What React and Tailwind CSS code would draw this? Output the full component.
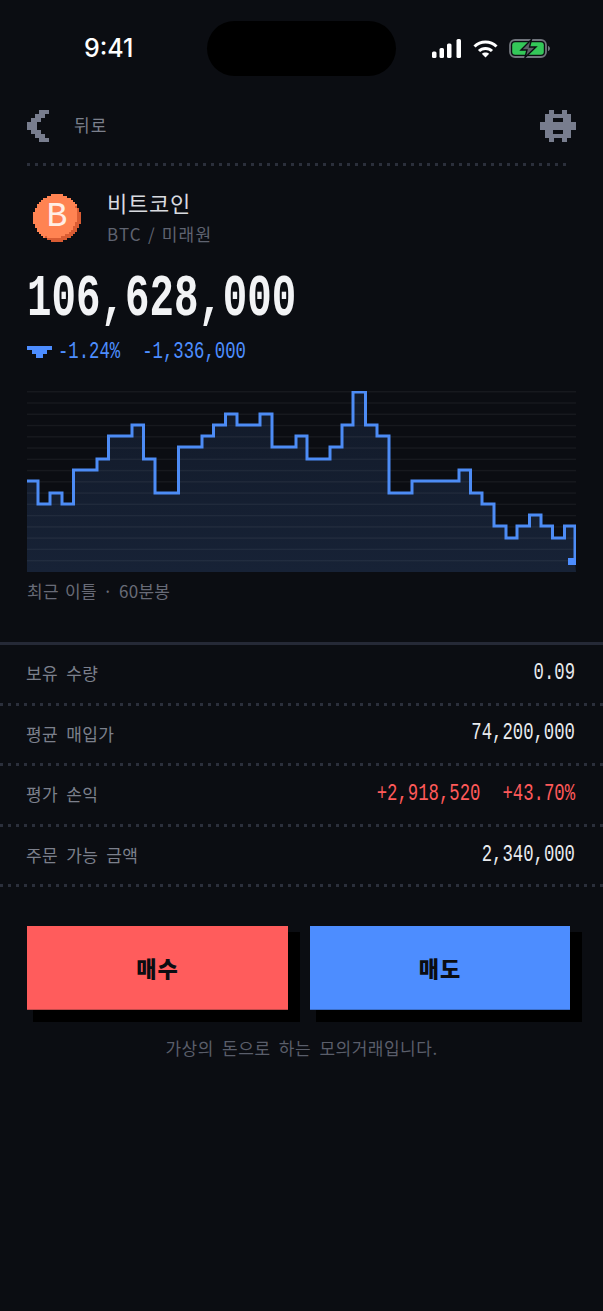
import React from "react";

const mono = "font-['Liberation_Mono',monospace] slashed-zero";
const kr = "font-['Noto_Sans_CJK_KR','Noto_Sans',sans-serif]";
const dotted =
  "h-[3px] bg-[repeating-linear-gradient(90deg,#2b2f3b_0_3px,transparent_3px_8px)]";

// step line of the chart, x / y in page pixels minus chart origin
const points = [
  [27, 481], [38, 481], [38, 504], [50, 504], [50, 493], [62, 493], [62, 504], [73.5, 504],
  [73.5, 470], [97, 470], [97, 459], [108.5, 459], [108.5, 436], [132, 436], [132, 425],
  [143.5, 425], [143.5, 459], [155, 459], [155, 493], [178.5, 493], [178.5, 447], [202, 447],
  [202, 436], [213.5, 436], [213.5, 425], [225.5, 425], [225.5, 414], [237, 414], [237, 425],
  [260, 425], [260, 414], [272, 414], [272, 447], [296, 447], [296, 436], [307, 436],
  [307, 459], [330, 459], [330, 447], [342, 447], [342, 425], [353, 425], [353, 392],
  [365.5, 392], [365.5, 425], [377, 425], [377, 436], [389, 436], [389, 493], [412, 493],
  [412, 481], [459, 481], [459, 470], [470.5, 470], [470.5, 493], [482, 493], [482, 504],
  [494, 504], [494, 526], [506, 526], [506, 538], [517, 538], [517, 526], [529.5, 526],
  [529.5, 515], [541, 515], [541, 526], [552.5, 526], [552.5, 538], [564.5, 538], [564.5, 526],
  [575, 526], [575, 561],
].map(([x, y]) => [x - 27, y - 391]);

const linePath = points.map(([x, y], i) => `${i ? "L" : "M"}${x} ${y}`).join(" ");
const gridYs = Array.from({ length: 16 }, (_, i) => 0.5 + i * 11.26);

const chevronRows = [
  [3, 5], [2, 4], [1, 3], [0, 2], [0, 2], [1, 3], [2, 4], [3, 5],
];

const hashRows = [
  [[2.2, 3.4], [5.6, 6.8]],
  [[1.2, 7.8]],
  [[1.2, 3.3], [5.7, 7.8]],
  [[0, 9]],
  [[0, 9]],
  [[1.2, 3.3], [5.7, 7.8]],
  [[1.2, 7.8]],
  [[2.2, 3.4], [5.6, 6.8]],
];

function BackIcon() {
  return (
    <svg width="24" height="36" viewBox="0 0 6 8" shapeRendering="crispEdges">
      {chevronRows.map(([a, b], i) => (
        <rect key={i} x={a} y={i} width={b - a + 0.4} height="1" fill="#787d8e" />
      ))}
    </svg>
  );
}

function HashIcon() {
  return (
    <svg width="36" height="34" viewBox="0 0 9 8" shapeRendering="crispEdges">
      {hashRows.map((row, i) =>
        row.map(([a, b]) => (
          <rect key={`${i}-${a}`} x={a} y={i} width={b - a} height="1" fill="#787d8e" />
        ))
      )}
    </svg>
  );
}

function Coin() {
  const cells = [];
  for (let y = 0; y < 24; y++) {
    for (let x = 0; x < 24; x++) {
      const dx = x - 11.5;
      const dy = y - 11.5;
      if (dx * dx + dy * dy > 140) continue;
      const inner = (dx + 1.5) * (dx + 1.5) + (dy + 1.5) * (dy + 1.5) <= 135 || dx + dy < 4;
      cells.push(
        <rect key={`${x}-${y}`} x={x} y={y} width="1" height="1" fill={inner ? "#ff8352" : "#d95c33"} />
      );
    }
  }
  return (
    <div className="relative w-[48px] h-[48px]">
      <svg width="48" height="48" viewBox="0 0 24 24" shapeRendering="crispEdges">
        {cells}
      </svg>
      <span
        className={`absolute inset-0 flex items-center justify-center text-[#ffeee5] text-[29px] scale-x-[1.2] scale-y-[1.2] ${mono}`}
      >
        B
      </span>
    </div>
  );
}

function StatusIcons() {
  return (
    <div className="flex items-center">
      <svg width="30" height="19" viewBox="0 0 30 19" fill="#fff">
        <rect x="0" y="12.5" width="4.5" height="6.5" rx="1.5" />
        <rect x="7.5" y="9" width="4.5" height="10" rx="1.5" />
        <rect x="15" y="4.5" width="4.5" height="14.5" rx="1.5" />
        <rect x="24.5" y="0" width="4.5" height="19" rx="1.5" />
      </svg>
      <svg className="ml-[11px]" width="25" height="18" viewBox="0 0 25 18" fill="none" stroke="#fff" strokeWidth="3">
        <path d="M1.5 6.5C7.5 .5 17.5 .5 23.5 6.5" />
        <path d="M6 11C9.5 7.5 15.5 7.5 19 11" />
        <path d="M12.5 17.5L8.8 13.8C10.8 12 14.2 12 16.2 13.8Z" fill="#fff" stroke="none" />
      </svg>
      <svg className="ml-[11px]" width="41" height="19" viewBox="0 0 41 19">
        <rect x="1" y="1" width="36" height="17" rx="5" fill="none" stroke="#70747c" strokeWidth="1.8" />
        <rect x="3.2" y="3.2" width="31.6" height="12.6" rx="3" fill="#34c759" />
        <path d="M39 7v5c1.2-.3 2-1.3 2-2.500S40.200 7.300 39 7z" fill="#70747c" />
        <path d="M22.500 0.500L12 11h6l-2 7.500L27 8h-6.500z" fill="#5b5f66" stroke="#0b0d12" strokeWidth="1.400" />
      </svg>
    </div>
  );
}

function Chart() {
  const fillPath = `${linePath} L549 181 L0 181 Z`;
  return (
    <svg width="549" height="181" viewBox="0 0 549 181" className="block">
      <defs>
        <linearGradient id="area" x1="0" y1="0" x2="0" y2="1">
          <stop offset="0" stopColor="#121a29" />
          <stop offset="1" stopColor="#172236" />
        </linearGradient>
      </defs>
      <path d={fillPath} fill="url(#area)" />
      {gridYs.map((y) => (
        <rect key={y} x="0" y={y - 0.5} width="549" height="1.500" fill="#ffffff" fillOpacity="0.05" />
      ))}
      <path d={linePath} fill="none" stroke="#4d8cf5" strokeWidth="3" strokeLinejoin="miter" />
      <rect x="541" y="167" width="8" height="7" fill="#4d8dff" />
    </svg>
  );
}

const rows = [
  { label: "보유 수량", values: ["0.09"] },
  { label: "평균 매입가", values: ["74,200,000"] },
  { label: "평가 손익", values: ["+2,918,520", "+43.70%"], red: true },
  { label: "주문 가능 금액", values: ["2,340,000"] },
];

export default function App() {
  return (
    <div className="min-h-[1311px] bg-[#0b0d12] text-white overflow-hidden">
      {/* status bar */}
      <div className="flex items-center h-[55px] relative top-[21px]">
        <span className="w-[207px] pl-[84px] font-['Inter',sans-serif] text-[25px] font-medium leading-none">
          9:41
        </span>
        <div className="w-[189px] h-[55px] rounded-full bg-black" />
        <div className="pl-[36px]">
          <StatusIcons />
        </div>
      </div>

      {/* header */}
      <div className="mt-[53px] pl-[27px] pr-[27px] flex items-center justify-between h-[36px]">
        <div className="flex items-center gap-[23px]">
          <BackIcon />
          <span className={`mb-[3px] text-[#7c808c] text-[17px] tracking-[1px] ${kr}`}>뒤로</span>
        </div>
        <HashIcon />
      </div>
      <div className={`mt-[19px] ml-[27px] w-[543px] ${dotted}`} />

      {/* coin */}
      <div className="mt-[28px] ml-[33px] flex">
        <Coin />
        <div className="ml-[26px] -mt-[7px]">
          <div className={`text-[22px] leading-[30px] text-[#d9dbe0] tracking-[0.8px] ${kr}`}>비트코인</div>
          <div className={`mt-[2px] text-[17px] leading-[30px] text-[#5f6370] tracking-[1.2px] [word-spacing:1px] ${kr}`}>
            BTC / 미래원
          </div>
        </div>
      </div>

      {/* price */}
      <div
        className={`mt-[24px] ml-[27px] text-[40.800px] leading-[52px] text-[#f2f3f5] scale-y-[1.45] font-bold ${mono}`}
      >
        106,628,000
      </div>
      <div className="mt-[15px] ml-[27px] flex items-center h-[24px]">
        <svg width="25" height="12" viewBox="0 0 25 12" shapeRendering="crispEdges" fill="#4d8dff">
          <rect x="0" y="0" width="25" height="4" />
          <rect x="5" y="4" width="15" height="4" />
          <rect x="9" y="8" width="7" height="4" />
        </svg>
        <span className={`ml-[6px] text-[17.300px] text-[#4d8dff] scale-y-[1.4] ${mono}`}>-1.24%</span>
        <span className={`ml-[22px] text-[17.300px] text-[#4d8dff] scale-y-[1.4] ${mono}`}>-1,336,000</span>
      </div>

      {/* chart */}
      <div className="mt-[27px] ml-[27px]">
        <Chart />
      </div>
      <div className={`mt-[6px] ml-[27px] text-[17px] leading-[26px] text-[#686b77] tracking-[0.3px] [word-spacing:2px] ${kr}`}>
        최근 이틀 · 60분봉
      </div>

      {/* holdings */}
      <div className="mt-[38px] h-[3px] bg-[#252936]" />
      {rows.map((r) => (
        <div key={r.label}>
          <div className="h-[57.600px] pl-[26px] pr-[28px] pb-[2px] flex items-center justify-between">
            <span className={`text-[17px] text-[#7c808c] tracking-[0.36px] [word-spacing:4px] ${kr}`}>{r.label}</span>
            <div className="flex gap-[22px]">
              {r.values.map((v) => (
                <span
                  key={v}
                  className={`text-[17.300px] scale-y-[1.4] ${mono} ${r.red ? "text-[#ff5a5a]" : "text-[#e8eaee]"}`}
                >
                  {v}
                </span>
              ))}
            </div>
          </div>
          <div className={dotted} />
        </div>
      ))}

      {/* order buttons */}
      <div className="mt-[39px] pl-[27px] flex gap-[22px]">
        <button className={`w-[261px] h-[84px] bg-[#ff5c5c] border-b border-[#c24a4a] shadow-[9px_9px_0_3px_#000] text-[22px] font-black tracking-[1px] text-[#0b0d12] ${kr}`}>
          매수
        </button>
        <button className={`w-[260px] h-[84px] bg-[#4d8dff] border-b border-[#3c6fc9] shadow-[9px_9px_0_3px_#000] text-[22px] font-black tracking-[1px] text-[#0b0d12] ${kr}`}>
          매도
        </button>
      </div>
      <div className={`mt-[25px] text-center text-[17px] leading-[26px] text-[#5a5e6a] tracking-[0.5px] [word-spacing:4px] ${kr}`}>
        가상의 돈으로 하는 모의거래입니다.
      </div>
    </div>
  );
}
